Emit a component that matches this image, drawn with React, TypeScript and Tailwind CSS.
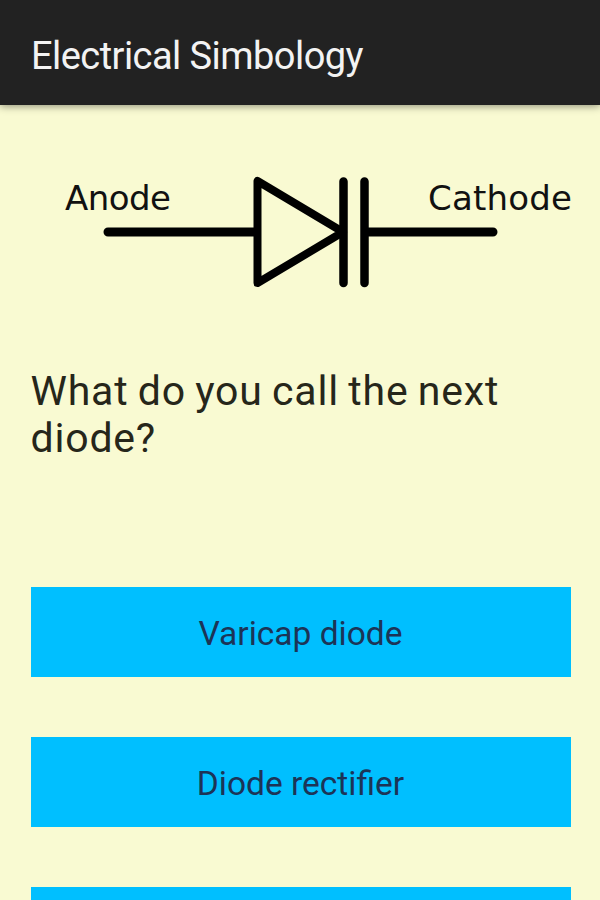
const ANSWERS = ['Varicap diode', 'Diode rectifier', ''];

function VaricapSymbol() {
    return (
        <svg viewBox="0 0 600 140" className="w-full h-[140px] block" fill="none" stroke="#000">
            <g strokeWidth="9" strokeLinecap="round">
                <path d="M108 72H256M368 72H493" />
                <path d="M343.500 21.500V123M364.500 21.500V123" strokeWidth="8.500" />
            </g>
            <path d="M257.500 21V123L343 72Z" strokeWidth="8" strokeLinejoin="round" />
            <g fill="#111" stroke="none" fontSize="34" fontFamily="'DejaVu Sans', sans-serif">
                <text x="65" y="50" textLength="106">Anode</text>
                <text x="428" y="50" textLength="144">Cathode</text>
            </g>
        </svg>
    );
}

export default function App() {
    return (
        <div className="h-[900px] w-[600px] overflow-hidden bg-[#f9fad2] font-['Roboto',sans-serif] text-[#26261a]">
            <header className="flex h-[105px] items-center bg-[#222] pl-[31px] pt-[7px] shadow-[0_1px_8px_rgba(0,0,0,0.45)]">
                <h1 className="text-[38px] tracking-[-0.55px] whitespace-nowrap text-[#f3f3f3]">Electrical Simbology</h1>
            </header>

            <main className="pl-[30.5px] pr-[29.5px] pt-[55px]">
                <div className="-ml-[30.5px] -mr-[29.5px]">
                    <VaricapSymbol />
                </div>

                <p className="mt-[68px] h-[219px] text-[41px] leading-[47px] tracking-[0.8px] [word-spacing:-1.6px]">
                    What do you call the next<br />diode?
                </p>

                {/* Answers */}
                <div className="flex flex-col gap-[60px]">
                    {ANSWERS.map((answer, index) => (
                        <button key={index} className="h-[90px] w-full bg-[#00bfff] pt-[5px] text-[33.5px] text-[#1c3457]">
                            {answer}
                        </button>
                    ))}
                </div>
            </main>
        </div>
    );
}
